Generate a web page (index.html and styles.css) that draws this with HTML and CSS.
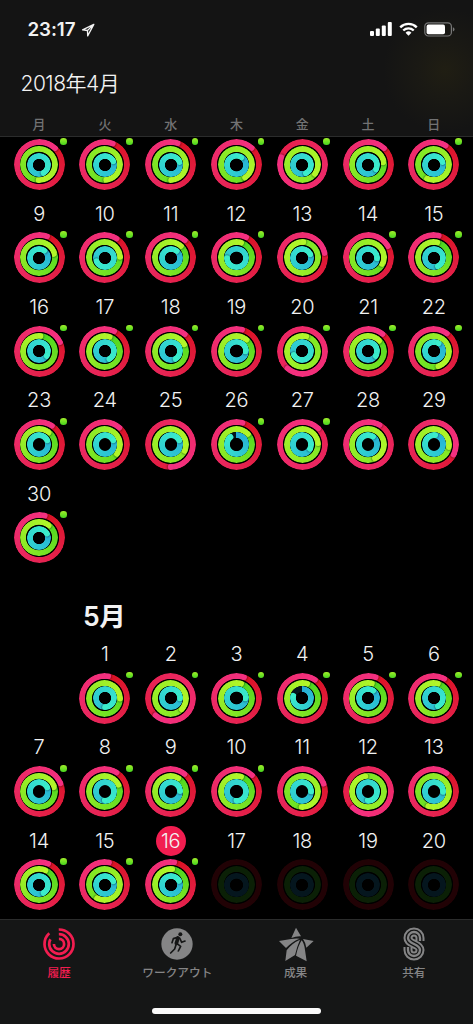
FILE: index.html
```
<!DOCTYPE html>
<html lang="ja">
<head>
  <meta charset="UTF-8">
  <meta name="viewport" content="width=device-width, initial-scale=1.0">
  <title>アクティビティ</title>
  <link rel="stylesheet" href="styles.css">
</head>
<body>

  <div class="app">
    <header class="header">
      <div class="status-bar">
        <div class="clock">
          <span>23:17</span>
          <svg class="location" viewBox="0 0 14 14"><path d="M12.8 1.4 1.6 6.9l4.9.6.2 5.4z M12.8 1.4 6.5 7.5"/></svg>
        </div>
        <div class="status-icons">
          <svg class="signal" viewBox="0 0 22 14">
            <rect x="0" y="9" width="4" height="5" rx="1"/>
            <rect x="5.8" y="6.4" width="4" height="7.6" rx="1"/>
            <rect x="11.8" y="3.4" width="4" height="10.6" rx="1"/>
            <rect x="17.8" y="0" width="4" height="14" rx="1"/>
          </svg>
          <svg class="wifi" viewBox="0 0 20 14">
            <path class="wave" d="M1.3 5.2a12.4 12.4 0 0 1 17.4 0M4.5 8.6a7.9 7.9 0 0 1 11 0"/>
            <path d="M10 14 6.9 11a4.4 4.4 0 0 1 6.2 0z"/>
          </svg>
          <svg class="battery" viewBox="0 0 31 15">
            <rect class="shell" x=".8" y=".8" width="26.6" height="13.2" rx="3.6"/>
            <rect x="2.6" y="2.6" width="18.4" height="9.6" rx="1.8"/>
            <path class="tip" d="M28.9 5.2q1.6.6 1.6 2.2t-1.6 2.2z"/>
          </svg>
        </div>
      </div>
      <h1 class="current-month">2018年4月</h1>
      <div class="weekdays">
        <span>月</span><span>火</span><span>水</span><span>木</span><span>金</span><span>土</span><span>日</span>
      </div>
    </header>

    <main class="calendar">
      <div class="month" id="april"></div>
      <div class="month-title"><h2>5月</h2></div>
      <div class="month" id="may"></div>
    </main>

    <footer class="footer">
      <nav class="tabs">
        <a class="tab active">
          <svg class="tab-icon" viewBox="-18 -18 36 36">
            <g class="arcs" transform="rotate(-91)">
              <circle r="14.5" pathLength="360" stroke-dasharray="319 360"/>
              <circle r="9.8" pathLength="360" stroke-dasharray="300 360"/>
              <circle r="5.1" pathLength="360" stroke-dasharray="272 360"/>
            </g>
          </svg>
          <span>履歴</span>
        </a>
        <a class="tab">
          <svg class="tab-icon" viewBox="478 46 108 108">
            <circle cx="532" cy="100" r="47"/>
            <circle class="cut" cx="542" cy="71" r="6"/>
            <path class="runner" d="M535 82 530 98"/>
            <path class="limb" d="M534 80 521 84 517 96M540 82 546 95 556 91M530 99 525 115 513 127M532 99 543 107 536 121"/>
          </svg>
          <span>ワークアウト</span>
        </a>
        <a class="tab">
          <svg class="tab-icon" viewBox="133 46 108 108">
            <path d="M187 51 202 77Q188 76 173 82z"/>
            <path d="M136 91 172 85Q184 83 198 84 176 92 157 112z"/>
            <path d="M199 87Q190 107 184 133L155 151 159 119Q174 98 199 87z"/>
            <path d="M204 89Q212 99 214 118L219 152 187 135Q193 106 204 89z"/>
            <path d="M208 85 240 91 218 111Q216 96 208 85z"/>
          </svg>
          <span>成果</span>
        </a>
        <a class="tab">
          <svg class="tab-icon share" viewBox="487 46 108 108">
            <path class="s-outer" d="M559 91V82A18 18 0 0 0 523 82C523 102 559 98 559 118A18 18 0 0 1 523 118V109"/>
            <path class="s-gap" d="M559 92V82A18 18 0 0 0 523 82C523 102 559 98 559 118A18 18 0 0 1 523 118V108"/>
            <path class="s-line" d="M559 91V82A18 18 0 0 0 523 82C523 102 559 98 559 118A18 18 0 0 1 523 118V109"/>
          </svg>
          <span>共有</span>
        </a>
      </nav>
      <div class="home-indicator"></div>
    </footer>
  </div>

  <script src="script.js"></script>
</body>
</html>
```
FILE: styles.css
```
:root {
  --bar-bg: #151616;
  --line: #2b2c2c;
  --pink: #f21d50;
  --gray: #858586;
  --pitch: 65.8px;
}

* {
  margin: 0;
  padding: 0;
  box-sizing: border-box;
}

body {
  background: #000;
  color: #f2f2f2;
  font-family: Inter, "Noto Sans CJK JP", sans-serif;
  height: 100vh;
  overflow: hidden;
}

.app {
  width: 473px;
  height: 1024px;
  display: flex;
  flex-direction: column;
}

/* header */
.header {
  height: 136.5px;
  flex: none;
  background: radial-gradient(circle at 445px 70px, #201e13 0, #1a1914 28px, transparent 62px), #141414;
  border-bottom: 1.5px solid var(--line);
}

.status-bar {
  height: 58px;
  padding: 0 18px 0 27.5px;
  display: flex;
  align-items: center;
  justify-content: space-between;
}

.clock {
  display: flex;
  align-items: center;
  gap: 6px;
  font-size: 18.8px;
  font-weight: 600;
  letter-spacing: -0.1px;
}

.location {
  width: 14px;
  height: 14px;
  margin-top: 1px;
  fill: none;
  stroke: #f2f2f2;
  stroke-width: 1.3;
  stroke-linejoin: round;
}

.status-icons {
  display: flex;
  align-items: center;
  fill: #fff;
}

.signal {
  width: 22px;
  height: 14px;
  margin-right: 6.5px;
}

.wifi {
  width: 19px;
  height: 14px;
  margin-right: 6.5px;
}

.wave {
  fill: none;
  stroke: #fff;
  stroke-width: 2.5;
}

.battery {
  width: 31px;
  height: 15px;
}

.shell {
  fill: none;
  stroke: #777;
  stroke-width: 1.2;
}

.tip {
  fill: #777;
}

.current-month {
  height: 51px;
  padding-left: 20.5px;
  font-size: 21px;
  font-weight: 350;
  line-height: 52px;
  letter-spacing: -0.5px;
}

.weekdays {
  display: grid;
  grid-template-columns: repeat(7, var(--pitch));
  padding: 5px 0 0 6.2px;
  color: #727273;
  font-size: 13px;
  font-weight: 500;
  line-height: 20px;
  text-align: center;
}

/* calendar */
.calendar {
  flex: 1;
  min-height: 0;
  overflow: hidden;
  padding: 2.6px 0 0 6.2px;
}

.month,
.month-title {
  display: grid;
  grid-template-columns: repeat(7, var(--pitch));
}

.month-title {
  height: 67.2px;
}

.month-title h2 {
  grid-column: 2;
  padding: 33px 0 0 11px;
  font-size: 26.5px;
  font-weight: 600;
  line-height: 40px;
  letter-spacing: -0.5px;
  white-space: nowrap;
}

.day {
  display: flex;
  flex-direction: column;
  align-items: center;
}

.date {
  width: 30.2px;
  height: 30.2px;
  margin: 8.8px 0 3.3px;
  border-radius: 50%;
  font-size: 20px;
  font-weight: 350;
  line-height: 31px;
  text-align: center;
  letter-spacing: -0.2px;
}

.today .date {
  background: var(--pink);
}

/* activity rings */
.rings {
  position: relative;
  width: 51px;
  height: 51px;
  display: grid;
  place-items: center;
}

.ring {
  grid-area: 1 / 1;
  position: relative;
  width: var(--size);
  height: var(--size);
  border-radius: 50%;
  background: conic-gradient(from var(--end), color-mix(in srgb, var(--to) var(--mix), var(--from)), var(--to));
  -webkit-mask: radial-gradient(closest-side, transparent calc(100% - 6.3px), #000 calc(100% - 5.5px));
  mask: radial-gradient(closest-side, transparent calc(100% - 6.3px), #000 calc(100% - 5.5px));
}

.ring.open {
  background: conic-gradient(var(--from), var(--to) var(--end), var(--track) var(--end));
}

.move {
  --size: 51px;
  --from: #d90f1c;
  --to: #f43080;
  --track: #210205;
}

.exercise {
  --size: 37.2px;
  --from: #44d51f;
  --to: #b2f62a;
  --track: #0b2006;
}

.stand {
  --size: 24.2px;
  --from: #25aad6;
  --to: #3bedcb;
  --track: #05161e;
}

.head {
  position: absolute;
  inset: 0;
  transform: rotate(var(--end));
}

.head::after {
  content: "";
  position: absolute;
  top: 0;
  left: calc(50% - 3px);
  width: 6px;
  height: 6px;
  border-radius: 50%;
  background: var(--to);
  box-shadow: 1px 0 1.5px rgba(0, 0, 0, 0.32);
}

.future .ring {
  background: var(--track);
}

.badge {
  position: absolute;
  top: -1px;
  right: -2.3px;
  width: 6.6px;
  height: 6.6px;
  border-radius: 50%;
  background: linear-gradient(#a0ee2a, #46d51f);
}

/* bottom bar */
.footer {
  height: 105.5px;
  flex: none;
  background: var(--bar-bg);
  border-top: 1.5px solid var(--line);
}

.tabs {
  display: flex;
  height: 88px;
}

.tab {
  flex: 1;
  display: flex;
  flex-direction: column;
  align-items: center;
  padding-top: 6px;
  color: var(--gray);
  font-size: 11.7px;
  font-weight: 500;
  line-height: 18px;
}

.tab.active {
  color: var(--pink);
}

.tab-icon {
  width: 36px;
  height: 36px;
  margin-bottom: 2.5px;
  fill: currentColor;
}

.arcs {
  fill: none;
  stroke: currentColor;
  stroke-width: 2.7;
}

.cut {
  fill: var(--bar-bg);
}

.runner,
.limb {
  fill: none;
  stroke: var(--bar-bg);
  stroke-width: 11;
  stroke-linecap: round;
  stroke-linejoin: round;
}

.limb {
  stroke-width: 5;
}

.share {
  fill: none;
}

.s-outer {
  stroke: currentColor;
  stroke-width: 27;
}

.s-gap {
  stroke: var(--bar-bg);
  stroke-width: 15;
}

.s-line {
  stroke: currentColor;
  stroke-width: 7;
}

.home-indicator {
  width: 169px;
  height: 6.6px;
  margin: 0 auto;
  border-radius: 4px;
  background: #fafafa;
}
```
FILE: script.js
```
// [day, move, exercise, stand, goal badge], rings in degrees (360 = goal reached)
const april = [
  [2, 402, 538, 510, 1], [3, 380, 532, 425, 1], [4, 377, 536, 430, 1], [5, 401, 505, 395, 1],
  [6, 647, 845, 515, 1], [7, 402, 440, 478, 0], [8, 391, 563, 430, 1],
  [9, 378, 435, 395, 1], [10, 391, 445, 610, 1], [11, 398, 400, 398, 1], [12, 384, 375, 630, 1],
  [13, 437, 721, 425, 0], [14, 418, 472, 452, 1], [15, 372, 372, 515, 1],
  [16, 424, 365, 482, 1], [17, 384, 377, 512, 1], [18, 398, 420, 510, 1], [19, 373, 398, 452, 1],
  [20, 940, 732, 605, 1], [21, 397, 405, 482, 1], [22, 395, 520, 390, 1],
  [23, 392, 398, 425, 1], [24, 400, 485, 425, 0], [25, 538, 832, 425, 0], [26, 374, 405, 322, 1],
  [27, 763, 803, 480, 1], [28, 748, 870, 393, 0], [29, 475, 817, 367, 0],
  [30, 372, 398, 420, 1]
];

const may = [
  [1, 368, 448, 540, 1], [2, 580, 852, 452, 1], [3, 378, 375, 452, 1], [4, 392, 375, 285, 1],
  [5, 377, 374, 395, 1], [6, 387, 374, 515, 1],
  [7, 427, 432, 425, 1], [8, 391, 422, 542, 1], [9, 397, 388, 450, 1], [10, 402, 375, 538, 1],
  [11, 428, 542, 452, 0], [12, 582, 710, 542, 0], [13, 394, 558, 455, 0],
  [14, 381, 384, 510, 1], [15, 370, 567, 425, 1], [16, 368, 364, 422, 1],
  [17], [18], [19], [20]
];

function ring(name, value) {
  if (value === undefined) return `<div class="ring ${name}"></div>`;
  const open = value < 360 ? ' open' : '';
  const mix = open ? 0 : (value - 360) / value * 100;
  return `<div class="ring ${name}${open}" style="--end: ${value}deg; --mix: ${mix.toFixed(1)}%"><div class="head"></div></div>`;
}

function render(id, days, offset, labelFrom, today) {
  let html = '';
  days.forEach(([day, move, exercise, stand, badge], i) => {
    const state = day === today ? ' today' : move === undefined ? ' future' : '';
    const column = i === 0 ? ` style="grid-column: ${offset + 1}"` : '';
    html += `<div class="day${state}"${column}>
      ${day >= labelFrom ? `<div class="date">${day}</div>` : ''}
      <div class="rings">
        ${ring('move', move)}${ring('exercise', exercise)}${ring('stand', stand)}
        ${badge ? '<i class="badge"></i>' : ''}
      </div>
    </div>`;
  });
  document.getElementById(id).innerHTML = html;
}

// the first week of April is scrolled under the header, only its rings show
render('april', april, 0, 9);
render('may', may, 1, 1, 16);
```
